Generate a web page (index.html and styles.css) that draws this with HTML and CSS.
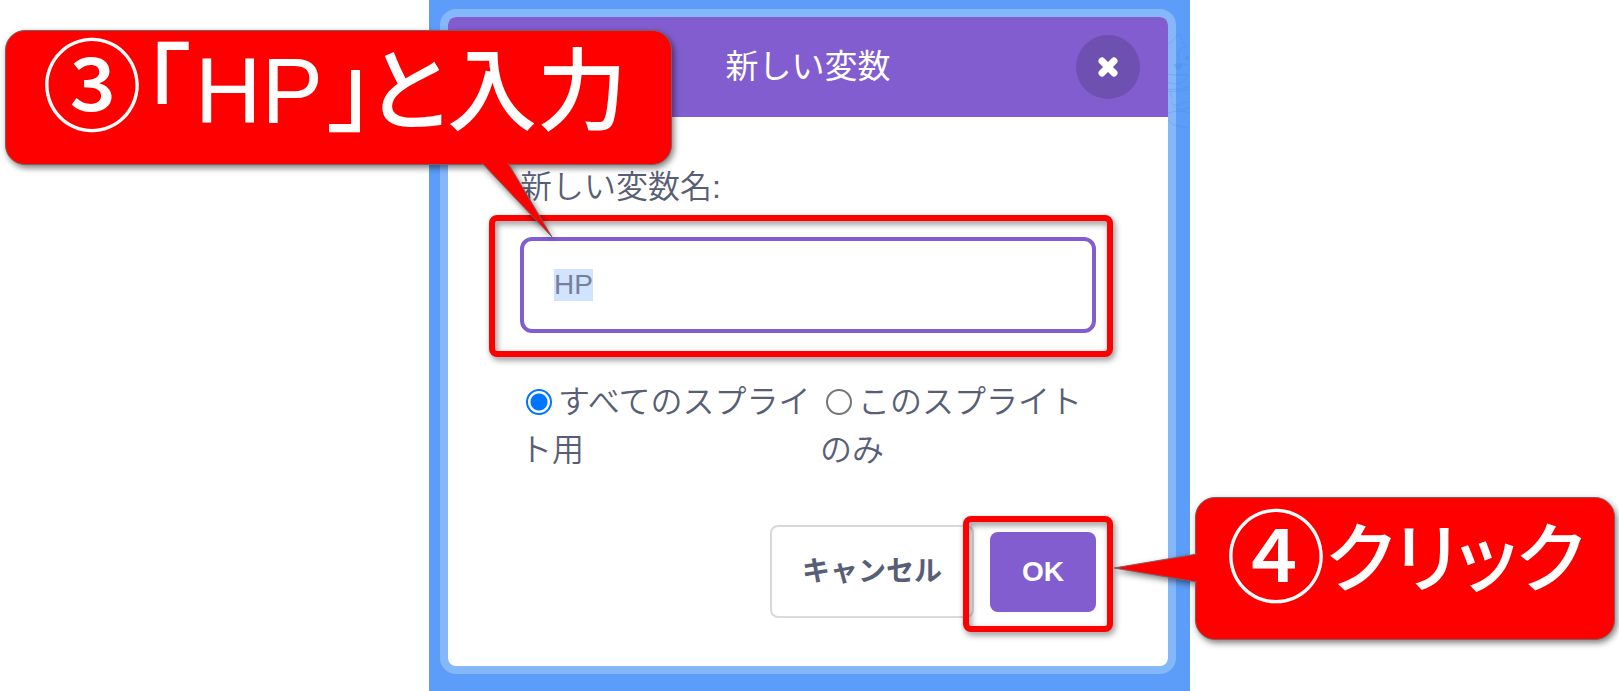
FILE: index.html
```html
<!DOCTYPE html>
<html lang="ja">
<head>
<meta charset="utf-8">
<title>新しい変数</title>
<link rel="stylesheet" href="styles.css">
</head>
<body>
<main class="stage">
  <form class="dialog">
    <header class="dialog-header">
      <h1 class="dialog-title">新しい変数</h1>
      <button class="close" type="button" aria-label="閉じる">
        <svg class="close-icon" viewBox="0 0 20 20" aria-hidden="true"><path d="M4 4 16 16M16 4 4 16"/></svg>
      </button>
    </header>
    <div class="dialog-body">
      <label class="field-label" for="variable-name">新しい変数名:</label>
      <div class="marked">
        <input class="field" id="variable-name" type="text" value="HP" autocomplete="off" spellcheck="false">
        <span class="highlight highlight-field"></span>
      </div>
      <div class="options">
        <label class="option"><input class="radio" type="radio" name="scope" checked>すべてのスプライト用</label>
        <label class="option"><input class="radio" type="radio" name="scope">このスプライトのみ</label>
      </div>
      <div class="actions">
        <button class="button cancel" type="button">キャンセル</button>
        <div class="marked">
          <button class="button ok" type="button">OK</button>
          <span class="highlight highlight-ok"></span>
        </div>
      </div>
    </div>
  </form>
  <svg class="cat" viewBox="324 30 63 300" aria-hidden="true">
    <path d="M324 72Q334 68 339 60Q347 50 359 40Q365 52 368 72Q378 78 387 80M324 163Q352 170 382 162Q378 190 345 192Q334 192 324 188M324 208Q360 210 387 200M324 214Q350 216 387 208M333 214Q328 222 336 232M333 246Q345 260 362 252Q376 240 387 250M336 254Q354 280 387 262M324 300Q340 322 387 322M324 280Q350 268 387 278"/>
    <path d="M378 82C356 80 350 98 357 116C364 132 378 136 387 132"/>
    <path class="cat-fill" d="M342 134Q354 126 368 134Q360 148 354 148Q346 146 342 134ZM376 115a5 6 0 1 0 10 0a5 6 0 1 0-10 0"/>
  </svg>
  <aside class="callout callout-input">
    <svg class="tail tail-input" viewBox="0 0 74 76" aria-hidden="true"><path d="M2 0 72 74 28 0"/></svg>
    <p class="callout-text"><span class="step">③</span>「<span class="latin">HP</span>」<span class="verb">と入力</span></p>
  </aside>
  <aside class="callout callout-click">
    <svg class="tail tail-click" viewBox="0 0 84 32" aria-hidden="true"><path d="M84 1 1 15 84 29"/></svg>
    <p class="callout-text"><span class="step">④</span><span class="kana">クリック</span></p>
  </aside>
</main>
<script src="script.js"></script>
</body>
</html>
```
FILE: script.js
```js
const field = document.getElementById("variable-name");
field.focus();
field.select();
```
FILE: styles.css
```css
* {
  box-sizing: border-box;
}

body {
  margin: 0;
  overflow-x: hidden;
  background: #fff;
  color: #575e75;
  font-family: "Liberation Sans", "Noto Sans CJK JP", sans-serif;
}

.stage {
  position: relative;
  max-width: 761px;
  min-height: 100vh;
  margin: 0 auto;
  padding: 9px 14px 17px 11px;
  background: #5c9df9;
}

.dialog {
  border: 8px solid #85b7fb;
  border-radius: 16px;
  background: #fff;
}

.dialog-header {
  display: grid;
  grid-template-columns: 64px 1fr 64px;
  align-items: center;
  padding: 18px 28px;
  border-radius: 8px 8px 0 0;
  background: #825dd0;
}

.dialog-title {
  grid-column: 2;
  margin: 0;
  color: #fff;
  font-size: 33px;
  font-weight: 400;
  line-height: 48px;
  text-align: center;
}

.close {
  display: grid;
  place-items: center;
  width: 64px;
  height: 64px;
  padding: 0;
  border: 0;
  border-radius: 50%;
  background: #6e50b0;
}

.close-icon {
  width: 20px;
  height: 20px;
  fill: none;
  stroke: #fff;
  stroke-width: 7;
  stroke-linecap: round;
}

.dialog-body {
  display: flex;
  flex-direction: column;
  padding: 46px 72px 48px;
}

.field-label {
  margin-bottom: 26px;
  font-size: 32px;
  font-weight: 350;
  line-height: 48px;
}

.marked {
  position: relative;
}

.field {
  display: block;
  width: 100%;
  height: 96px;
  padding: 0 30px;
  border: 4px solid #825dd0;
  border-radius: 12px;
  outline: 0;
  background: #fff;
  color: #787f98;
  caret-color: transparent;
  font-family: inherit;
  font-size: 28px;
}

.field::selection {
  background: #d0e4ff;
  color: #787f98;
}

.options {
  display: flex;
  margin: 45px 0 51px;
  font-size: 32px;
  font-weight: 350;
  line-height: 48px;
}

.radio {
  appearance: none;
  width: 26px;
  height: 26px;
  margin: 0 6px;
  border: 2px solid #767676;
  border-radius: 50%;
  vertical-align: -2px;
}

.radio:checked {
  border-color: #0075ff;
  background: radial-gradient(circle, #0075ff 8px, #fff 9px);
}

.actions {
  display: flex;
  justify-content: flex-end;
  align-items: center;
  gap: 16px;
}

.button {
  display: block;
  border-radius: 8px;
  font-family: inherit;
  font-size: 28px;
  font-weight: 700;
}

.cancel {
  padding: 24px 30px;
  border: 2px solid #d9d9d9;
  background: #fff;
  color: #575e75;
  line-height: 41px;
}

.ok {
  padding: 24px 32px;
  border: 0;
  background: #825dd0;
  color: #fff;
  line-height: 32px;
}

.highlight {
  position: absolute;
  border: 6px solid #f00;
  border-radius: 8px;
  filter: drop-shadow(2px 3px 3px rgba(0, 0, 0, 0.45));
  pointer-events: none;
}

.highlight-field {
  inset: -22px -17px -24px -31px;
}

.highlight-ok {
  inset: -16px -17px -20px -27px;
}

.cat {
  position: absolute;
  top: 30px;
  right: 1px;
  width: 21px;
  height: 100px;
  fill: none;
  stroke: #3f80dc;
  stroke-width: 3;
  opacity: 0.25;
}

.cat-fill {
  fill: #3f80dc;
}

.callout {
  position: absolute;
  border: 1px solid #7d5f5f;
  border-radius: 20px;
  background: #f00;
  color: #fff;
  filter: drop-shadow(2px 3px 3px rgba(0, 0, 0, 0.5));
}

.callout-input {
  top: 30px;
  left: -424px;
  width: 667px;
  padding: 0 36px 32px;
}

.callout-click {
  top: 497px;
  left: 766px;
  width: 420px;
  padding: 4px 30px 36px;
}

.callout-text {
  margin: 0;
  font-family: "Noto Sans CJK JP", sans-serif;
  font-size: 96px;
  font-weight: 500;
  font-feature-settings: "palt";
  line-height: 101px;
  white-space: nowrap;
}

.callout-text span {
  line-height: 0;
}

.step {
  font-size: 100px;
}

.latin {
  margin: 0 5px;
  font-family: "Liberation Sans", sans-serif;
  font-size: 92px;
}

.verb {
  margin-left: -8px;
  font-size: 90px;
}

.kana {
  font-size: 76px;
  vertical-align: 8px;
}

.tail {
  position: absolute;
  fill: #f00;
  stroke: #7d5f5f;
}

.tail-input {
  top: 132px;
  left: 474px;
  width: 74px;
  height: 76px;
}

.tail-click {
  top: 55px;
  left: -83px;
  width: 84px;
  height: 32px;
}
```
